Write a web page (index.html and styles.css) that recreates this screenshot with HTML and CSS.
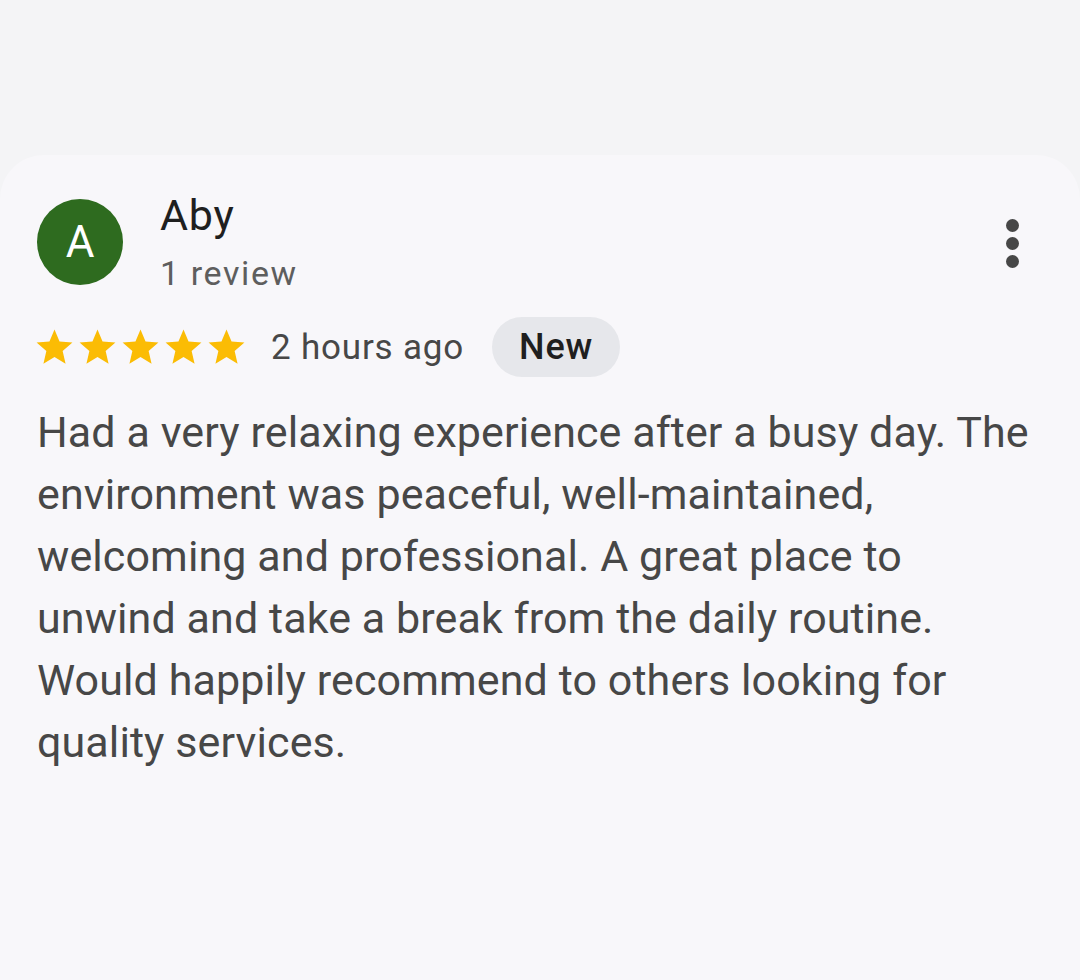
FILE: index.html
```html
<!DOCTYPE html>
<html lang="en">
<head>
<meta charset="utf-8">
<title>Review</title>
<link rel="stylesheet" href="styles.css">
</head>
<body>
<div class="top-space"></div>
<div class="card">
  <div class="header">
    <div class="avatar">A</div>
    <div class="who">
      <div class="name">Aby</div>
      <div class="count">1 review</div>
    </div>
    <div class="more" aria-label="More options">
      <span class="dot"></span><span class="dot"></span><span class="dot"></span>
    </div>
  </div>
  <div class="meta">
    <div class="stars">
      <svg class="star" viewBox="0 0 24 24"><path d="M12 17.27L18.18 21l-1.64-7.03L22 9.24l-7.19-.61L12 2 9.19 8.63 2 9.24l5.46 4.73L5.82 21z"/></svg>
      <svg class="star" viewBox="0 0 24 24"><path d="M12 17.27L18.18 21l-1.64-7.03L22 9.24l-7.19-.61L12 2 9.19 8.63 2 9.24l5.46 4.73L5.82 21z"/></svg>
      <svg class="star" viewBox="0 0 24 24"><path d="M12 17.27L18.18 21l-1.64-7.03L22 9.24l-7.19-.61L12 2 9.19 8.63 2 9.24l5.46 4.73L5.82 21z"/></svg>
      <svg class="star" viewBox="0 0 24 24"><path d="M12 17.27L18.18 21l-1.64-7.03L22 9.24l-7.19-.61L12 2 9.19 8.63 2 9.24l5.46 4.73L5.82 21z"/></svg>
      <svg class="star" viewBox="0 0 24 24"><path d="M12 17.27L18.18 21l-1.64-7.03L22 9.24l-7.19-.61L12 2 9.19 8.63 2 9.24l5.46 4.73L5.82 21z"/></svg>
    </div>
    <span class="time">2 hours ago</span>
    <span class="chip">New</span>
  </div>
  <p class="text">Had a very relaxing experience after a busy day. The environment was peaceful, well-maintained, welcoming and professional. A great place to unwind and take a break from the daily routine. Would happily recommend to others looking for quality services.</p>
</div>
</body>
</html>
```

FILE: styles.css
```css
html, body {
  margin: 0;
  padding: 0;
}
body {
  background: #f4f4f6;
  font-family: Roboto, "Liberation Sans", sans-serif;
  width: 1080px;
  height: 980px;
  overflow: hidden;
}
.top-space {
  height: 155px;
}
.card {
  background: #f8f7fa;
  border-radius: 44px 44px 0 0;
  height: 825px;
  padding: 44px 37px 0 37px;
  box-sizing: border-box;
}
.header {
  display: flex;
  align-items: flex-start;
}
.avatar {
  width: 86px;
  height: 86px;
  border-radius: 50%;
  background: #2e6b1f;
  color: #ffffff;
  font-size: 44px;
  display: flex;
  align-items: center;
  justify-content: center;
  flex: none;
}
.who {
  margin-left: 37px;
  margin-top: -12px;
  flex: 1;
}
.name {
  font-size: 43px;
  letter-spacing: 0.8px;
  color: #1f1f1f;
  line-height: 56px;
}
.count {
  font-size: 34px;
  letter-spacing: 1.6px;
  color: #5e5e5e;
  line-height: 32px;
  margin-top: 14px;
}
.more {
  display: flex;
  flex-direction: column;
  gap: 5px;
  margin-top: 20px;
  margin-right: 24px;
}
.dot {
  width: 13px;
  height: 13px;
  border-radius: 50%;
  background: #474747;
}
.meta {
  display: flex;
  align-items: center;
  margin-top: 28px;
}
.stars {
  display: flex;
  margin-left: -4px;
}
.star {
  width: 43px;
  height: 43px;
  fill: #fbbc04;
}
.time {
  margin-left: 23px;
  font-size: 35px;
  letter-spacing: 0.8px;
  color: #474747;
}
.chip {
  margin-left: 28px;
  background: #e6e7eb;
  color: #1f1f1f;
  font-size: 36px;
  font-weight: 500;
  letter-spacing: 0.9px;
  height: 60px;
  line-height: 60px;
  padding: 0 27px;
  border-radius: 30px;
}
.text {
  margin: 24px 0 0 0;
  font-size: 43px;
  letter-spacing: 0.1px;
  line-height: 62px;
  color: #474747;
}
```
